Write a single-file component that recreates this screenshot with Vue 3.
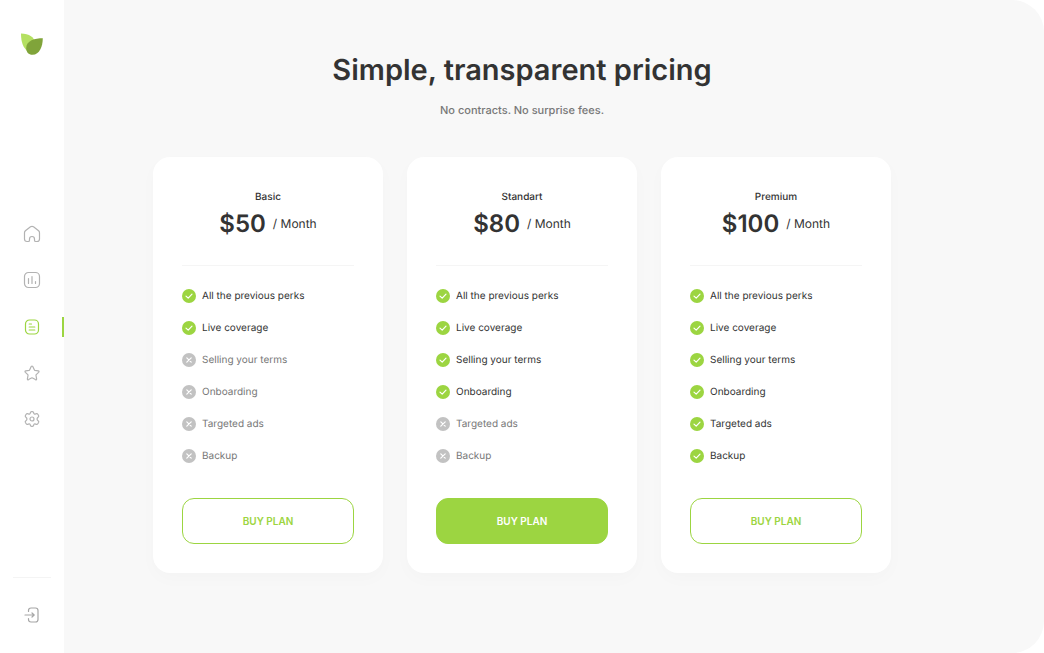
<script setup>
import { ref } from 'vue'

const navItems = [
  { id: 'home', label: 'Home' },
  { id: 'stats', label: 'Statistics' },
  { id: 'plans', label: 'Plans' },
  { id: 'favorites', label: 'Favorites' },
  { id: 'settings', label: 'Settings' },
]
const active = ref('plans')

const features = [
  'All the previous perks',
  'Live coverage',
  'Selling your terms',
  'Onboarding',
  'Targeted ads',
  'Backup',
]

const plans = [
  { name: 'Basic', price: '$50', included: 2, featured: false },
  { name: 'Standart', price: '$80', included: 4, featured: true },
  { name: 'Premium', price: '$100', included: 6, featured: false },
]
</script>

<template>
  <div class="layout">
    <aside class="sidebar">
      <a class="logo" href="#" aria-label="Homepage">
        <svg width="24" height="24" viewBox="0 0 24 24">
          <path d="M1 1.500C9 1.500 15 5 15 12C14 17 12 20 8.500 20C3 16 1 10 1 1.500Z" fill="#b4e061" />
          <path d="M22.800 6.200C15 6.200 6.200 8.500 6.200 16C6.200 20 8.500 22.800 12.500 22.800C19.500 22.800 22.800 14 22.800 6.200Z" fill="#80a43a" />
        </svg>
      </a>
      <nav aria-label="Main">
        <ul class="nav-list">
          <li v-for="item in navItems" :key="item.id">
            <a
              class="nav-link"
              :class="{ active: item.id === active }"
              :href="'#' + item.id"
              :aria-label="item.label"
              @click="active = item.id"
            >
              <svg v-if="item.id === 'home'" class="icon" viewBox="0 0 18 18">
                <path d="M1.500 7.800Q1.500 6.600 2.400 5.800L7.500 1.800Q9 .8 10.500 1.800L15.600 5.800Q16.500 6.600 16.500 7.800V14Q16.500 16.500 14 16.500H12.800Q11.500 16.500 11.500 15.200V14A2.500 2.500 0 0 0 6.500 14V15.200Q6.500 16.500 5.200 16.500H4Q1.500 16.500 1.500 14Z" />
              </svg>
              <svg v-else-if="item.id === 'stats'" class="icon" viewBox="0 0 18 18">
                <rect x="1.500" y="1.500" width="15" height="15" rx="4" />
                <path d="M5.500 7.500V12.500M9 5.500V12.500M12.500 10.500V12.500" />
              </svg>
              <svg v-else-if="item.id === 'plans'" class="icon" viewBox="0 0 18 18">
                <rect x="2.500" y="2" width="13" height="14" rx="4" />
                <path d="M6.200 6H8.500M6.200 9H11.800M6.200 12H11.800" />
              </svg>
              <svg v-else-if="item.id === 'favorites'" class="icon" viewBox="0 0 18 18">
                <path d="M8.200 2.600Q9 1.400 9.800 2.600L11.300 5.800Q11.500 6.300 12 6.400L15.200 6.900Q16.600 7.200 15.600 8.300L13.200 10.700Q12.900 11 13 11.500L13.600 14.800Q13.700 16.200 12.400 15.600L9.600 14Q9 13.700 8.400 14L5.600 15.600Q4.300 16.200 4.400 14.800L5 11.500Q5.100 11 4.800 10.700L2.400 8.300Q1.400 7.200 2.800 6.900L6 6.400Q6.500 6.300 6.700 5.800Z" />
              </svg>
              <svg v-else class="icon" viewBox="0 0 18 18">
                <path d="M7.300 2.800Q7.500 1.700 8.600 1.700H9.400Q10.500 1.700 10.700 2.800Q11 4.500 12.600 3.900Q14.200 3.200 14.800 4.200L15.600 5.500Q16.100 6.500 15.100 7.200Q13 9 15.100 10.800Q16.100 11.500 15.600 12.500L14.800 13.800Q14.200 14.800 12.600 14.100Q11 13.500 10.700 15.200Q10.500 16.300 9.400 16.300H8.600Q7.500 16.300 7.300 15.200Q7 13.500 5.400 14.100Q3.800 14.800 3.200 13.800L2.400 12.500Q1.900 11.500 2.900 10.800Q5 9 2.900 7.200Q1.900 6.500 2.400 5.500L3.200 4.200Q3.800 3.200 5.400 3.900Q7 4.500 7.300 2.800Z" />
                <circle cx="9" cy="9" r="2" />
              </svg>
            </a>
          </li>
        </ul>
      </nav>
      <div class="sidebar-foot">
        <button class="logout" type="button" aria-label="Log out">
          <svg class="icon" viewBox="0 0 18 18">
            <path d="M5.500 5.500V4.500Q5.500 2 8 2H12.500Q15 2 15 4.500V13.500Q15 16 12.500 16H8Q5.500 16 5.500 13.500V12.500M2 9H11M9 7L11.200 9L9 11" />
          </svg>
        </button>
      </div>
    </aside>

    <main class="content">
      <h1 class="title">Simple, transparent pricing</h1>
      <p class="subtitle">No contracts. No surprise fees.</p>

      <div class="plans">
        <section v-for="plan in plans" :key="plan.name" class="card">
          <h2 class="plan-name">{{ plan.name }}</h2>
          <p class="price">
            <strong class="amount">{{ plan.price }}</strong>
            <span class="period">/ Month</span>
          </p>
          <ul class="features">
            <li
              v-for="(feature, index) in features"
              :key="feature"
              class="feature"
              :class="{ off: index >= plan.included }"
            >
              <svg class="mark" viewBox="0 0 14 14" aria-hidden="true">
                <circle cx="7" cy="7" r="7" />
                <path v-if="index < plan.included" d="M4 7.100L6.200 9.100L10 5.200" />
                <path v-else d="M4.800 4.800L9.200 9.200M9.200 4.800L4.800 9.200" />
              </svg>
              <span>{{ feature }}</span>
            </li>
          </ul>
          <button class="buy" :class="{ filled: plan.featured }" type="button">BUY PLAN</button>
        </section>
      </div>
    </main>
  </div>
</template>

<style>
body {
  margin: 0;
  background: #fff;
}
</style>

<style scoped>
.layout {
  display: grid;
  grid-template-columns: 64px 1fr;
  min-height: 100vh;
  font-family: Inter, "Liberation Sans", sans-serif;
  text-rendering: geometricPrecision;
  color: #333;
}

.sidebar {
  display: grid;
  grid-template-rows: 1fr auto 1fr;
  justify-items: center;
  background: #fff;
}

.logo {
  height: 24px;
  margin-top: 32px;
}

.logo svg {
  display: block;
}

nav {
  width: 100%;
}

.nav-list {
  display: flex;
  flex-direction: column;
  justify-content: space-between;
  height: 205px;
  margin: 0;
  padding: 0;
  list-style: none;
}

.nav-link {
  display: flex;
  align-items: center;
  justify-content: center;
  height: 20px;
  box-sizing: border-box;
  border: 0 solid #9cd541;
  color: #b2b2b2;
}

.nav-link.active {
  border-width: 0 2px;
  border-left-color: transparent;
  color: #9cd541;
}

.icon {
  display: block;
  width: 18px;
  height: 18px;
  fill: none;
  stroke: currentColor;
  stroke-width: 1.2;
  stroke-linecap: round;
  stroke-linejoin: round;
}

.sidebar-foot {
  align-self: end;
  display: flex;
  justify-content: center;
  width: 38px;
  padding: 28px 0 29px;
  border-top: 1px solid #f4f4f4;
}

.logout {
  padding: 0;
  border: 0;
  background: none;
  color: #a6a6a6;
  cursor: pointer;
}

.content {
  display: flex;
  flex-direction: column;
  align-items: center;
  padding: 50px 64px 48px 0;
  background: #f8f8f8;
  border-radius: 0 32px 32px 0;
}

.title {
  margin: 0;
  font-size: 29px;
  line-height: 40px;
  font-weight: 600;
}

.subtitle {
  margin: 12px 0 0;
  font-size: 11px;
  line-height: 16px;
  font-weight: 500;
  color: #777;
}

.plans {
  display: grid;
  grid-template-columns: repeat(3, 230px);
  gap: 24px;
  margin-top: 39px;
}

.card {
  padding: 32px 29px 29px;
  background: #fff;
  border-radius: 17px;
  box-shadow: 0 6px 18px rgba(0, 0, 0, 0.02);
}

.plan-name {
  margin: 0;
  font-size: 10px;
  line-height: 16px;
  font-weight: 500;
  text-align: center;
}

.price {
  display: flex;
  align-items: center;
  justify-content: center;
  gap: 7px;
  margin: 0;
  padding: 3px 0 25px;
  border-bottom: 1px solid #f5f5f5;
}

.amount {
  font-size: 24px;
  line-height: 32px;
  font-weight: 600;
}

.period {
  font-size: 12px;
  line-height: 16px;
}

.features {
  display: grid;
  gap: 16px;
  margin: 22px 0 34px;
  padding: 0;
  list-style: none;
}

.feature {
  display: flex;
  align-items: center;
  gap: 6px;
  font-size: 10px;
  line-height: 16px;
}

.feature.off {
  color: #777;
}

.mark {
  width: 14px;
  height: 14px;
  fill: #9cd541;
}

.off .mark {
  fill: #c2c2c2;
}

.mark path {
  fill: none;
  stroke: #fff;
  stroke-width: 1.2;
  stroke-linecap: round;
  stroke-linejoin: round;
}

.buy {
  width: 100%;
  height: 46px;
  padding: 0;
  border: 1px solid #9cd541;
  border-radius: 12px;
  background: #fff;
  color: #9cd541;
  font-family: inherit;
  font-size: 10px;
  line-height: 16px;
  font-weight: 600;
  cursor: pointer;
}

.buy.filled {
  background: #9cd541;
  color: #fff;
}
</style>
